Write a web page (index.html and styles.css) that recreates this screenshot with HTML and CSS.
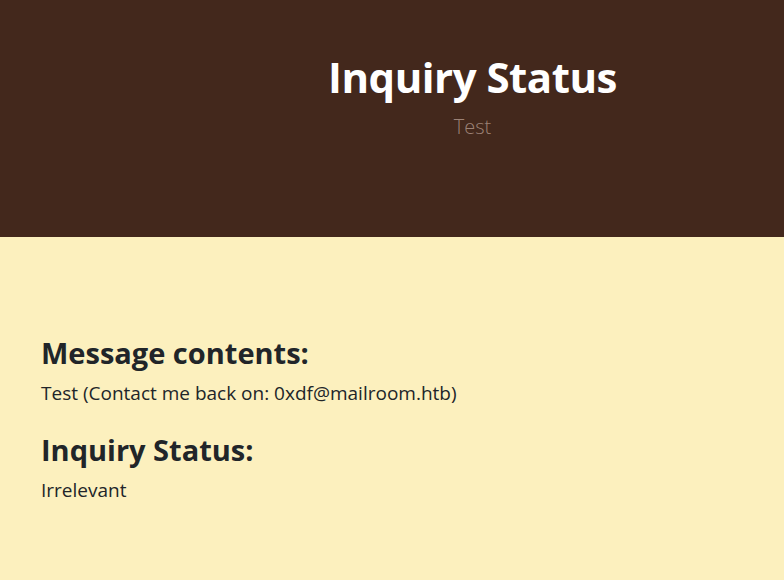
FILE: index.html
```html
<!DOCTYPE html>
<html lang="en">
<head>
<meta charset="utf-8">
<title>Inquiry Status</title>
<link rel="stylesheet" href="styles.css">
</head>
<body>
<header class="hero">
  <div class="hero-inner">
    <h1 class="hero-title">Inquiry Status</h1>
    <p class="hero-sub">Test</p>
  </div>
</header>
<main class="content">
  <h3 class="section-title">Message contents:</h3>
  <p class="section-text">Test (Contact me back on: 0xdf@mailroom.htb)</p>
  <h3 class="section-title">Inquiry Status:</h3>
  <p class="section-text">Irrelevant</p>
</main>
</body>
</html>
```
FILE: styles.css
```css
html, body {
  margin: 0;
  padding: 0;
}
body {
  background: #fcf0be;
  font-family: "Open Sans", "DejaVu Sans", sans-serif;
  color: #212529;
  height: 579px;
}
.hero {
  background: #43281c;
  height: 237px;
  box-sizing: border-box;
  padding-left: 161px;
}
.hero-inner {
  text-align: center;
  padding-top: 47px;
}
.hero-title {
  margin: 0;
  color: #ffffff;
  font-size: 42px;
  font-weight: 700;
  line-height: 60px;
  letter-spacing: -0.5px;
}
.hero-sub {
  margin: 6px 0 0;
  color: #9c8276;
  font-size: 20px;
  font-weight: 300;
  line-height: 28px;
}
.content {
  padding: 97px 41px 0;
}
.section-title {
  margin: 0;
  font-size: 29px;
  font-weight: 700;
  line-height: 38px;
}
.section-text {
  margin: 8px 0 25px;
  font-size: 19px;
  font-weight: 400;
  line-height: 26px;
}
```
